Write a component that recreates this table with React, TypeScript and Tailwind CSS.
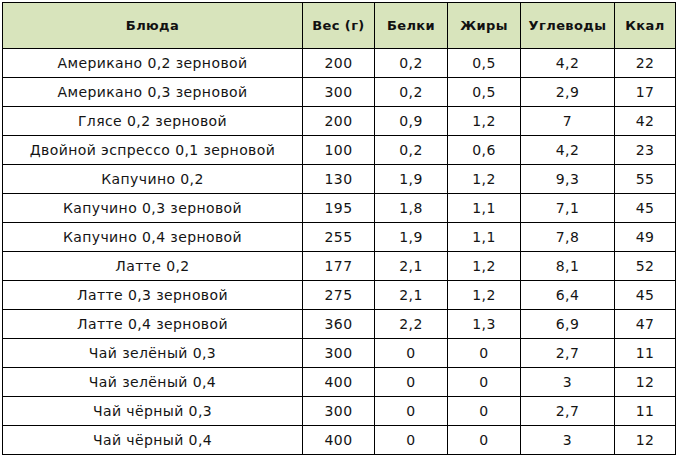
const rows: [string, string, string, string, string, string][] = [
  ['Американо 0,2 зерновой', '200', '0,2', '0,5', '4,2', '22'],
  ['Американо 0,3 зерновой', '300', '0,2', '0,5', '2,9', '17'],
  ['Глясе 0,2 зерновой', '200', '0,9', '1,2', '7', '42'],
  ['Двойной эспрессо 0,1 зерновой', '100', '0,2', '0,6', '4,2', '23'],
  ['Капучино 0,2', '130', '1,9', '1,2', '9,3', '55'],
  ['Капучино 0,3 зерновой', '195', '1,8', '1,1', '7,1', '45'],
  ['Капучино 0,4 зерновой', '255', '1,9', '1,1', '7,8', '49'],
  ['Латте 0,2', '177', '2,1', '1,2', '8,1', '52'],
  ['Латте 0,3 зерновой', '275', '2,1', '1,2', '6,4', '45'],
  ['Латте 0,4 зерновой', '360', '2,2', '1,3', '6,9', '47'],
  ['Чай зелёный 0,3', '300', '0', '0', '2,7', '11'],
  ['Чай зелёный 0,4', '400', '0', '0', '3', '12'],
  ['Чай чёрный 0,3', '300', '0', '0', '2,7', '11'],
  ['Чай чёрный 0,4', '400', '0', '0', '3', '12'],
];

const headers = ['Блюда', 'Вес (г)', 'Белки', 'Жиры', 'Углеводы', 'Ккал'];
const widths = ['w-[300px]', 'w-[72px]', 'w-[73px]', 'w-[73px]', 'w-[94px]', 'w-[61px]'];

export default function App() {
  return (
    <div className="h-[457px] w-[680px] bg-white pl-[2px] pt-[2px] font-['DejaVu_Sans',Verdana,sans-serif] text-[#141414]">
      <table className="w-[674px] table-fixed border-collapse border border-black">
        <colgroup>
          {widths.map((w, i) => (
            <col key={i} className={w} />
          ))}
        </colgroup>
        <thead>
          <tr className="h-[46px] bg-[#d8e4bc]">
            {headers.map((h) => (
              <th
                key={h}
                className="border border-black px-0 text-center text-[13px] font-bold tracking-[0.4px] text-[#111]"
              >
                {h}
              </th>
            ))}
          </tr>
        </thead>
        <tbody>
          {rows.map((r) => (
            <tr key={r[0]} className="h-[29px]">
              {r.map((c, i) => (
                <td key={i} className="border border-black px-0 text-center text-[14px] tracking-[0.4px]">
                  {c}
                </td>
              ))}
            </tr>
          ))}
        </tbody>
      </table>
    </div>
  );
}
